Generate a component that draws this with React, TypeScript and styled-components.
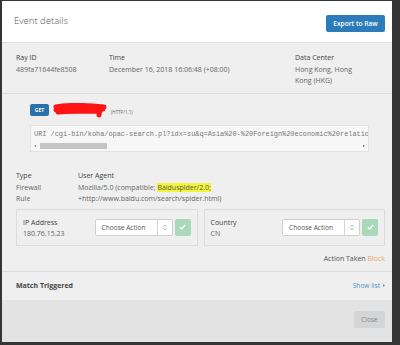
import React from 'react';
import styled, { createGlobalStyle } from 'styled-components';

const GlobalStyle = createGlobalStyle`
  html, body {
    margin: 0;
    padding: 0;
    background: #353535;
  }
  body {
    font-family: 'Open Sans', 'Liberation Sans', sans-serif;
  }
`;

const Frame = styled.div`
  width: 400px;
  height: 345px;
  padding: 1px 8px 3px 2px;
  box-sizing: border-box;
`;

const Modal = styled.div`
  width: 390px;
  height: 341px;
  display: flex;
  flex-direction: column;
  background: #eeefee;
  overflow: hidden;
`;

const Header = styled.div`
  height: 41px;
  flex: none;
  display: flex;
  align-items: center;
  justify-content: space-between;
  padding: 0 7px 0 12px;
  background: #fff;
  border-bottom: 1px solid #dedede;
`;

const Title = styled.h1`
  margin: 0 0 2px;
  font-size: 9.5px;
  font-weight: 300;
  color: #555;
`;

const PrimaryButton = styled.button`
  width: 59px;
  height: 17px;
  margin-top: 4px;
  padding: 0;
  border: none;
  border-radius: 2px;
  background: #2b7cb9;
  color: #fff;
  font-family: inherit;
  font-size: 6.6px;
  font-weight: 600;
`;

const InfoRow = styled.div`
  height: 51px;
  flex: none;
  box-sizing: border-box;
  display: grid;
  grid-template-columns: 93px 186px 1fr;
  padding: 9px 0 0 14px;
  border-bottom: 1px solid #dedede;
`;

const Label = styled.div<{ $bold?: boolean }>`
  font-size: 7px;
  line-height: 11.5px;
  color: #444;
  font-weight: ${(p) => (p.$bold ? 700 : 400)};
`;

const Value = styled.div`
  font-size: 7px;
  line-height: 11.5px;
  color: #666;
`;

const RequestSection = styled.div`
  padding: 9px 23px 0 28px;
  flex: none;
`;

const RequestLine = styled.div`
  display: flex;
  align-items: center;
  height: 14px;
`;

const MethodBadge = styled.span`
  display: inline-flex;
  align-items: center;
  justify-content: center;
  width: 19px;
  height: 12px;
  border-radius: 2px;
  background: #2b72ab;
  color: #fff;
  font-size: 5px;
  font-weight: 700;
`;

const Protocol = styled.span`
  margin: 4px 0 0 3px;
  font-size: 4.5px;
  color: #666;
`;

const UriBox = styled.div`
  margin-top: 8px;
  height: 27px;
  box-sizing: border-box;
  background: #f7f7f7;
  border: 1px solid #e2e2e2;
  display: flex;
  flex-direction: column;
  overflow: hidden;
`;

const UriText = styled.div`
  padding: 4px 0 0 3px;
  font-family: 'Liberation Mono', monospace;
  font-size: 6.9px;
  line-height: 9px;
  color: #777;
  white-space: nowrap;
`;

const ScrollTrack = styled.div`
  margin-top: 4px;
  height: 6px;
  display: flex;
  align-items: center;
  padding: 0 3px;
  gap: 4px;
`;

const ScrollThumb = styled.div`
  width: 67px;
  height: 6px;
  background: #c4c4c4;
`;

const Arrow = styled.span<{ $right?: boolean }>`
  width: 0;
  height: 0;
  border-top: 1.5px solid transparent;
  border-bottom: 1.5px solid transparent;
  ${(p) =>
    p.$right
      ? 'border-left: 2px solid #555; margin-left: auto;'
      : 'border-right: 2px solid #888;'}
`;

const DetailGrid = styled.div`
  display: grid;
  grid-template-columns: 62px 1fr;
  padding: 18px 14px 0;
  flex: none;
`;

const Highlight = styled.span`
  background: #f5f53a;
  color: #555;
`;

const TargetRow = styled.div`
  display: grid;
  grid-template-columns: 1fr 1fr;
  gap: 6px;
  margin: 4px 7px 0 14px;
  flex: none;
`;

const TargetBox = styled.div`
  height: 37px;
  box-sizing: border-box;
  border: 1px solid #dcdcdc;
  display: flex;
  align-items: center;
  padding: 0 6px 0 6px;
`;

const TargetText = styled.div`
  flex: 1;
  padding-top: 2px;
`;

const Select = styled.div`
  width: 78px;
  height: 17px;
  box-sizing: border-box;
  background: #fff;
  border: 1px solid #cfcfcf;
  border-radius: 2px;
  display: flex;
  align-items: center;
  font-size: 6.6px;
  color: #555;
`;

const SelectLabel = styled.span`
  flex: 1;
  padding-left: 6px;
`;

const SelectCaret = styled.span`
  width: 14px;
  height: 100%;
  border-left: 1px solid #d6d6d6;
  display: flex;
  align-items: center;
  justify-content: center;
`;

const ApplyButton = styled.div`
  width: 16px;
  height: 17px;
  margin-left: 2px;
  border-radius: 2px;
  background: #a9d9b9;
  display: flex;
  align-items: center;
  justify-content: center;
`;

const ActionTaken = styled.div`
  text-align: right;
  padding: 8px 7px 0 0;
  height: 26px;
  box-sizing: border-box;
  font-size: 7px;
  color: #555;
  flex: none;
  border-bottom: 1px solid #dedede;
`;

const Block = styled.span`
  color: #f3a46a;
`;

const MatchRow = styled.div`
  height: 28px;
  flex: none;
  display: flex;
  align-items: center;
  justify-content: space-between;
  padding: 0 7px 0 14px;
`;

const ShowList = styled.a`
  font-size: 6.6px;
  color: #4f8fc4;
  display: flex;
  align-items: center;
  gap: 3px;
`;

const Footer = styled.div`
  flex: 1;
  background: #e3e3e3;
  display: flex;
  align-items: center;
  justify-content: flex-end;
  padding: 0 7px 2px 0;
`;

const CloseButton = styled.button`
  width: 31px;
  height: 17px;
  padding: 0;
  border: none;
  border-radius: 2px;
  background: #d4d5d6;
  color: #888;
  font-family: inherit;
  font-size: 6.6px;
`;

function Caret() {
  return (
    <svg width='4' height='7' viewBox='0 0 4 7'>
      <path d='M0.5 2.6 L2 1 L3.5 2.6 M0.5 4.4 L2 6 L3.5 4.4' fill='none' stroke='#999' strokeWidth='0.7' />
    </svg>
  );
}

function Check() {
  return (
    <svg width='7' height='6' viewBox='0 0 7 6'>
      <path d='M0.8 3.2 L2.7 5 L6.2 1' fill='none' stroke='#fff' strokeWidth='1.3' />
    </svg>
  );
}

function Redaction() {
  return (
    <svg width='56' height='15' viewBox='0 0 56 15' style={{ marginLeft: 3 }}>
      <path
        d='M4 4 C14 2, 32 2, 52 4 M4 7 C18 5, 38 5, 51 6 M6 9 C20 8, 40 8, 48 8 M48 6 L47 12'
        fill='none'
        stroke='#ff1414'
        strokeWidth='5'
        strokeLinecap='round'
      />
    </svg>
  );
}

function TargetCard({ label, value }: { label: string; value: string }) {
  return (
    <TargetBox>
      <TargetText>
        <Label>{label}</Label>
        <Value>{value}</Value>
      </TargetText>
      <Select>
        <SelectLabel>Choose Action</SelectLabel>
        <SelectCaret>
          <Caret />
        </SelectCaret>
      </Select>
      <ApplyButton>
        <Check />
      </ApplyButton>
    </TargetBox>
  );
}

export default function App() {
  return (
    <Frame>
      <GlobalStyle />
      <Modal>
        <Header>
          <Title>Event details</Title>
          <PrimaryButton>Export to Raw</PrimaryButton>
        </Header>

        <InfoRow>
          <div>
            <Label>Ray ID</Label>
            <Value>489fa71644fe8508</Value>
          </div>
          <div>
            <Label>Time</Label>
            <Value>December 16, 2018 16:06:48 (+08:00)</Value>
          </div>
          <div>
            <Label>Data Center</Label>
            <Value>
              Hong Kong, Hong
              <br />
              Kong (HKG)
            </Value>
          </div>
        </InfoRow>

        <RequestSection>
          <RequestLine>
            <MethodBadge>GET</MethodBadge>
            <Redaction />
            <Protocol>(HTTP/1.1)</Protocol>
          </RequestLine>
          <UriBox>
            <UriText>
              URI /cgi-bin/koha/opac-search.pl?idx=su&amp;q=Asia%20-%20Foreign%20economic%20relations
            </UriText>
            <ScrollTrack>
              <Arrow />
              <ScrollThumb />
              <Arrow $right />
            </ScrollTrack>
          </UriBox>
        </RequestSection>

        <DetailGrid>
          <div>
            <Label>Type</Label>
            <Value>
              Firewall
              <br />
              Rule
            </Value>
          </div>
          <div>
            <Label>User Agent</Label>
            <Value>
              Mozilla/5.0 (compatible; <Highlight>Baiduspider/2.0;</Highlight>
              <br />
              +http://www.baidu.com/search/spider.html)
            </Value>
          </div>
        </DetailGrid>

        <TargetRow>
          <TargetCard label='IP Address' value='180.76.15.23' />
          <TargetCard label='Country' value='CN' />
        </TargetRow>

        <ActionTaken>
          Action Taken <Block>Block</Block>
        </ActionTaken>

        <MatchRow>
          <Label $bold>Match Triggered</Label>
          <ShowList>
            Show list
            <svg width='2' height='3' viewBox='0 0 2 3'>
              <path d='M0 0 L2 1.5 L0 3 Z' fill='#4f8fc4' />
            </svg>
          </ShowList>
        </MatchRow>

        <Footer>
          <CloseButton>Close</CloseButton>
        </Footer>
      </Modal>
    </Frame>
  );
}
